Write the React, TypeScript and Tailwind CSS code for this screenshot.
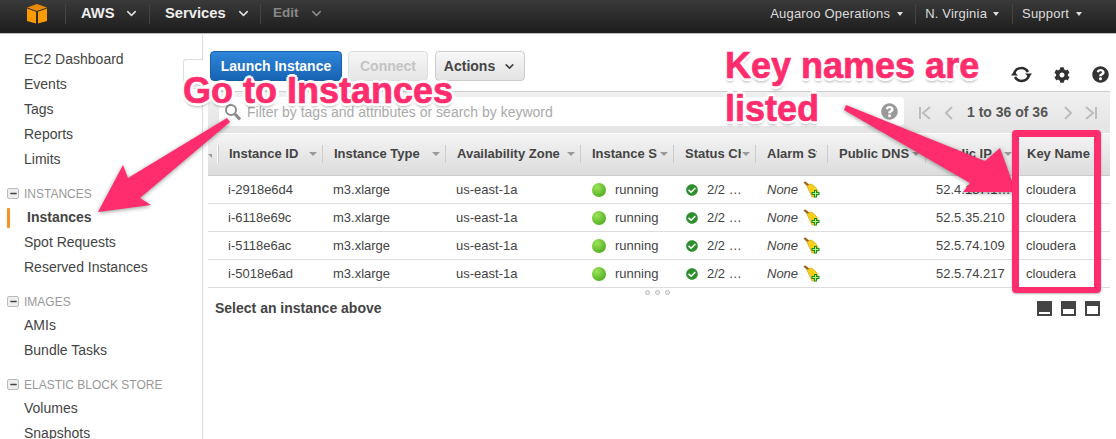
import React from 'react'
import { FaCog, FaQuestionCircle, FaCheckCircle } from 'react-icons/fa'
import { ChevronDown, Minus } from 'lucide-react'

const cols = 'grid grid-cols-[10px_105px_123px_135px_93px_82px_72px_98px_92px_92px]'

const sideGroups = [
  { title: 'INSTANCES', items: ['Instances', 'Spot Requests', 'Reserved Instances'] },
  { title: 'IMAGES', items: ['AMIs', 'Bundle Tasks'] },
  { title: 'ELASTIC BLOCK STORE', items: ['Volumes', 'Snapshots'] },
]

const headers = ['Instance ID', 'Instance Type', 'Availability Zone', 'Instance State', 'Status Checks', 'Alarm Status', 'Public DNS', 'Public IP', 'Key Name']

const rows = [
  { id: 'i-2918e6d4', ip: '52.4.187.1…' },
  { id: 'i-6118e69c', ip: '52.5.35.210' },
  { id: 'i-5118e6ac', ip: '52.5.74.109' },
  { id: 'i-5018e6ad', ip: '52.5.74.217' },
]

const annotation =
  "absolute text-[36px] font-bold text-[#ff2d6d] whitespace-nowrap [-webkit-text-stroke:0.7px_#ff2d6d] [text-shadow:3px_0_0_white,-3px_0_0_white,0_3px_0_white,0_-3px_0_white,2px_2px_0_white,-2px_2px_0_white,2px_-2px_0_white,-2px_-2px_0_white,0_4px_3px_rgba(0,0,0,0.3)]"

const Caret = ({ color = 'border-t-[#999]' }: { color?: string }) => (
  <span className={`inline-block shrink-0 w-0 h-0 border-x-[4px] border-x-transparent border-t-[4px] ${color}`} />
)

const NavCaret = () => (
  <span className="inline-block shrink-0 w-0 h-0 border-x-[3.5px] border-x-transparent border-t-[4px] border-t-[#ddd]" />
)

const Broom = () => (
  <svg width="17" height="17" viewBox="0 0 17 17" className="shrink-0">
    <path d="M0.5 1.5 L2 0.2 L7 4 L5 6 Z" fill="#9a6412" />
    <path d="M4 5 L7.5 2.8 C11 4 15 8 16 13 C14 15.5 11 16.5 9 16 C7.5 12 5 8.5 4 5 Z" fill="#f6cf1d" stroke="#d29f10" strokeWidth="0.6" />
    <path d="M11 9 h3 v2 h2.5 v3 h-2.5 v2.5 h-3 v-2.5 h-2.5 v-3 h2.5 z" fill="#1c8c1c" />
    <path d="M12 10 h1 v2 h2.5 v1 h-2.5 v2.5 h-1 v-2.5 h-2.5 v-1 h2.5 z" fill="#b6f58a" />
  </svg>
)

const PageArrow = ({ d }: { d: string }) => (
  <svg width="14" height="16" viewBox="0 0 14 16" fill="none" stroke="#bdbdbd" strokeWidth="2">
    <path d={d} />
  </svg>
)

const App: React.FC = () => {
  return (
    <div className="relative w-[1116px] h-[439px] overflow-hidden bg-white font-['Liberation_Sans',Arial,sans-serif] text-[#444]">
      {/* Top nav */}
      <div className="flex items-center justify-between h-[34px] pb-[6px] bg-gradient-to-b from-[#3a3a3a] to-[#1d1d1d] border-b border-[#bbb]">
        <div className="flex items-center h-full">
          <div className="flex items-center w-[66px] h-[20px] pl-[27px] border-r border-[#444]">
            <svg width="20" height="20" viewBox="0 0 20 20">
              <path d="M10 0 L20 3.5 L10 7 L0 3.5 Z" fill="#e88c05" />
              <path d="M0 4.5 L9 7.8 V19.5 L0 17 Z" fill="#ff9900" />
              <path d="M20 4.5 L11 7.8 V19.5 L20 17 Z" fill="#ff9900" />
            </svg>
          </div>
          <div className="flex items-center gap-[9px] w-[84px] h-[20px] pl-[15px] border-r border-[#444] text-[14.75px] font-bold text-[#eee]">
            AWS <ChevronDown size={15} strokeWidth={2.5} className="text-[#ddd]" />
          </div>
          <div className="flex items-center gap-[10px] w-[111px] h-[20px] pl-[15px] border-r border-[#444] text-[14.75px] font-bold text-[#eee]">
            Services <ChevronDown size={15} strokeWidth={2.5} className="text-[#ddd]" />
          </div>
          <div className="flex items-center gap-[10px] h-[20px] pl-[12px] text-[13.5px] font-bold text-[#888]">
            Edit <ChevronDown size={15} strokeWidth={2.5} className="text-[#888]" />
          </div>
        </div>
        <div className="flex items-center h-full text-[13px] tracking-[0.2px] text-[#ddd]">
          <div className="flex items-center gap-[7px] h-[20px] pr-[12px] border-r border-[#444]">
            Augaroo Operations <NavCaret />
          </div>
          <div className="flex items-center gap-[6px] h-[20px] pl-[9px] pr-[13px] border-r border-[#444]">
            N. Virginia <NavCaret />
          </div>
          <div className="flex items-center gap-[7px] h-[20px] pl-[9px] pr-[34px]">
            Support <NavCaret />
          </div>
        </div>
      </div>

      <div className="flex">
        {/* Sidebar */}
        <div className="w-[203px] h-[405px] shrink-0 pt-[13px] border-r border-[#ddd] text-[14px] text-[#444]">
          {['EC2 Dashboard', 'Events', 'Tags', 'Reports', 'Limits'].map((item) => (
            <div key={item} className="flex items-center h-[25px] pl-[24px]">{item}</div>
          ))}
          {sideGroups.map((group) => (
            <div key={group.title}>
              <div className="flex items-center gap-[5px] h-[20px] mt-[11px] mb-[2px] pl-[7px] pt-[1px] text-[12px] text-[#999]">
                <span className="flex items-center justify-center w-[12px] h-[11px] rounded-[2px] border border-[#bbb] bg-[#eee]">
                  <Minus size={9} strokeWidth={4} className="text-[#444]" />
                </span>
                {group.title}
              </div>
              {group.items.map((item) =>
                item === 'Instances' ? (
                  <div key={item} className="flex items-center h-[25px] pl-[7px] font-bold">
                    <span className="w-[3px] h-[20px] mr-[17px] rounded-[1px] bg-[#f7931e]" />
                    {item}
                  </div>
                ) : (
                  <div key={item} className="flex items-center h-[25px] pl-[24px]">{item}</div>
                ),
              )}
            </div>
          ))}
        </div>

        {/* Main */}
        <div className="flex-1 pl-[5px] pr-[6px]">
          {/* Toolbar */}
          <div className="flex items-center h-[30px] mt-[17px] pl-[2px] text-[14px] font-bold">
            <button className="w-[132px] h-[30px] rounded-[4px] border border-[#1a5ea8] bg-gradient-to-b from-[#2f86da] to-[#1763b3] text-white">Launch Instance</button>
            <button className="w-[80px] h-[30px] ml-[6px] rounded-[4px] border border-[#ddd] bg-gradient-to-b from-[#f6f6f6] to-[#e6e6e6] text-[#c4c4c4]">Connect</button>
            <button className="flex items-center justify-center gap-[8px] w-[90px] h-[30px] ml-[7px] rounded-[4px] border border-[#ccc] bg-gradient-to-b from-[#f8f8f8] to-[#e2e2e2] text-[#444]">
              Actions <ChevronDown size={13} strokeWidth={3} />
            </button>
            <div className="flex items-center gap-[22px] ml-auto pr-[1px] pt-[17px]">
              <svg width="21" height="17" viewBox="0 0 21 17" fill="none" stroke="#2d2d2d" strokeWidth="2.6">
                <path d="M3 8.5 C3.5 4.5 6.5 2 10.5 2 C13.5 2 15.5 3.5 17 6" />
                <path d="M18 8.5 C17.5 12.5 14.5 15 10.5 15 C7.5 15 5.5 13.5 4 11" />
                <path d="M14 7.5 H21 L18 11.5 Z" fill="#2d2d2d" stroke="none" />
                <path d="M0 9.5 H7 L3 5.5 Z" fill="#2d2d2d" stroke="none" />
              </svg>
              <FaCog size={16} className="text-[#333]" />
              <FaQuestionCircle size={17} className="text-[#333]" />
            </div>
          </div>

          {/* Filter bar */}
          <div className="flex items-center h-[42px] mt-[10px] pl-[11px] border-t border-[#ccc] bg-gradient-to-b from-[#f0f0f0] to-[#e4e4e4]">
            <div className="flex items-center justify-between w-[685px] h-[29px] mt-[-2px] rounded-[4px] bg-white pl-[5px] pr-[6px]">
              <div className="flex items-center gap-[6px]">
                <svg width="17" height="18" viewBox="0 0 17 18" fill="none" stroke="#8a8a8a">
                  <circle cx="7" cy="7" r="5" strokeWidth="2" />
                  <path d="M11 11 L16 16.5" strokeWidth="3" />
                </svg>
                <span className="pt-[2px] text-[14px] text-[#aaa]">Filter by tags and attributes or search by keyword</span>
              </div>
              <FaQuestionCircle size={17} className="text-[#999]" />
            </div>
            <div className="flex items-center ml-[14px] text-[14px] font-bold text-[#555]">
              <PageArrow d="M2 2 V14 M12 2 L5 8 L12 14" />
              <span className="ml-[10px]"><PageArrow d="M10 2 L4 8 L10 14" /></span>
              <span className="ml-[11px] whitespace-nowrap">1 to 36 of 36</span>
              <span className="ml-[13px]"><PageArrow d="M4 2 L10 8 L4 14" /></span>
              <span className="ml-[9px]"><PageArrow d="M2 2 L9 8 L2 14 M12 2 V14" /></span>
            </div>
          </div>

          {/* Table */}
          <div className={`${cols} h-[43px] pb-[1px] border-t border-white bg-gradient-to-b from-[#f4f4f4] to-[#dcdcdc] border-b border-b-[#ccc] text-[13px] font-bold text-[#444]`}>
            <div className="flex items-center justify-between">
              <span className="w-[4px] overflow-hidden"><Caret /></span>
              <span className="h-[18px] border-r border-[#fff] shadow-[1px_0_0_#ccc]" />
            </div>
            {headers.map((h, i) => (
              <div key={h} className={`relative flex items-center pr-[6px] ${i === 3 ? 'gap-[3px]' : 'gap-[1px]'} ${i === 8 ? 'pl-[9px]' : 'pl-[11px]'} ${i === 5 ? 'pr-[11px]' : ''}`}>
                <span className="flex-1 min-w-0 overflow-hidden whitespace-nowrap">{h}</span>
                {i < 8 && i !== 5 && <Caret />}
                {i < 8 && <span className="absolute right-0 top-[11px] h-[18px] border-r border-[#ccc]" />}
              </div>
            ))}
          </div>
          {rows.map((r) => (
            <div key={r.id} className={`${cols} h-[28px] border-b border-[#ddd] items-center text-[13px] text-[#444]`}>
              <span />
              <span className="pl-[10px]">{r.id}</span>
              <span className="pl-[10px]">m3.xlarge</span>
              <span className="pl-[10px]">us-east-1a</span>
              <span className="flex items-center gap-[9px] pl-[11px]">
                <span className="w-[14px] h-[14px] rounded-full bg-[radial-gradient(circle_at_35%_30%,#9be45a,#3d9e12)]" />
                running
              </span>
              <span className="flex items-center gap-[9px] pl-[12px] whitespace-nowrap">
                <FaCheckCircle size={12} className="text-[#2f8f2f]" />
                2/2 …
              </span>
              <span className="flex items-center gap-[5px] pl-[11px] italic">
                None <Broom />
              </span>
              <span />
              <span className="pl-[10px] whitespace-nowrap">{r.ip}</span>
              <span className="pl-[8px]">cloudera</span>
            </div>
          ))}

          {/* Detail pane */}
          <div className="flex justify-center gap-[5px] h-[9px] pt-[2px] pr-[3px]">
            {[0, 1, 2].map((i) => (
              <span key={i} className="w-[5px] h-[5px] rounded-full border border-[#bbb] bg-[#eee]" />
            ))}
          </div>
          <div className="flex items-center justify-between h-[22px] pl-[7px] pr-[10px]">
            <span className="text-[14px] font-bold text-[#444]">Select an instance above</span>
            <div className="flex gap-[9px]">
              <span className="flex items-end w-[15px] h-[15px] bg-[#444] p-[2px]"><span className="w-full h-[2px] bg-white" /></span>
              <span className="flex items-end w-[15px] h-[15px] bg-[#444] p-[2px]"><span className="w-full h-[5px] bg-white" /></span>
              <span className="flex items-end w-[15px] h-[15px] bg-[#444] p-[2px]"><span className="w-full h-[8px] bg-white" /></span>
            </div>
          </div>
        </div>
      </div>

      {/* Sidebar collapse tab */}
      <div className="absolute left-[183px] top-[59px] w-[20px] h-[30px] rounded-l-[3px] border border-r-0 border-[#ddd] bg-white" />

      {/* Annotations */}
      <svg className="absolute inset-0 pointer-events-none drop-shadow-[0_1px_2px_rgba(0,0,0,0.4)]" width="1116" height="439" viewBox="0 0 1116 439">
        <path d="M227 118 L230 122 L140 198 L151 205 L98 212 L123 165 L128 178 Z" fill="#ff2d6d" />
        <path d="M846 105 L844 110 L970 183 L963 192 L1016 192 L1000 148 L985 161 Z" fill="#ff2d6d" />
      </svg>
      <div className="absolute left-[1012px] top-[130px] w-[89px] h-[163px] rounded-[4px] border-x-[7px] border-t-[7px] border-b-[6px] border-[#ff2d6d] shadow-[0_1px_2px_rgba(0,0,0,0.3)]" />
      <div className={`${annotation} left-[183px] top-[70px] leading-[42px]`}>
        Go to Instances
      </div>
      <div className={`${annotation} left-[725px] top-[44px] leading-[43px]`}>
        Key names are
        <br />
        listed
      </div>
    </div>
  )
}

export default App
